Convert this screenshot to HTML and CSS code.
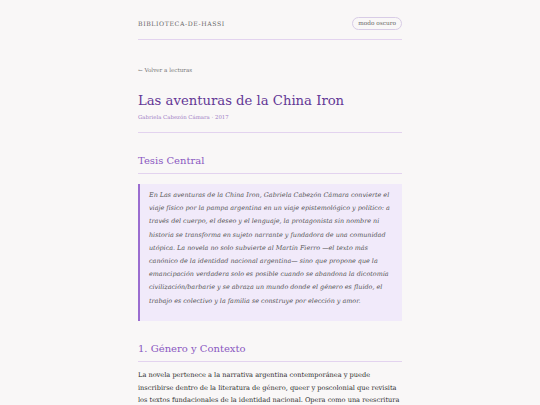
FILE: index.html
```html
<!DOCTYPE html>
<html lang="es">
<head>
<meta charset="utf-8">
<title>Las aventuras de la China Iron</title>
<link rel="stylesheet" href="styles.css">
</head>
<body>
<div class="page">
  <header class="site-header">
    <span class="brand">BIBLIOTECA-DE-HASSI</span>
    <button class="mode-btn">modo oscuro</button>
  </header>
  <a class="back" href="#">← Volver a lecturas</a>
  <div class="title-block">
    <h1 class="title">Las aventuras de la China Iron</h1>
    <p class="meta">Gabriela Cabezón Cámara · 2017</p>
  </div>
  <h2 class="section-title">Tesis Central</h2>
  <blockquote class="thesis">En Las aventuras de la China Iron, Gabriela Cabezón Cámara convierte el viaje físico por la pampa argentina en un viaje epistemológico y político: a través del cuerpo, el deseo y el lenguaje, la protagonista sin nombre ni historia se transforma en sujeto narrante y fundadora de una comunidad utópica. La novela no solo subvierte al Martín Fierro —el texto más canónico de la identidad nacional argentina— sino que propone que la emancipación verdadera solo es posible cuando se abandona la dicotomía civilización/barbarie y se abraza un mundo donde el género es fluido, el trabajo es colectivo y la familia se construye por elección y amor.</blockquote>
  <h2 class="section-title">1. Género y Contexto</h2>
  <p class="body-text">La novela pertenece a la narrativa argentina contemporánea y puede inscribirse dentro de la literatura de género, queer y poscolonial que revisita los textos fundacionales de la identidad nacional. Opera como una reescritura del poema gauchesco, desplazando la voz masculina hacia una mirada femenina y disidente.</p>
</div>
</body>
</html>
```
FILE: styles.css
```css
html, body {
  margin: 0;
  padding: 0;
  background: #f9f7f7;
}
body {
  font-family: "DejaVu Serif", Georgia, serif;
  color: #333;
}
.page {
  width: 264px;
  margin: 0 auto;
  padding-top: 17px;
}
.site-header {
  display: flex;
  justify-content: space-between;
  align-items: center;
  padding-bottom: 9px;
  border-bottom: 1px solid #e3d3ef;
}
.brand {
  font-size: 6.2px;
  letter-spacing: 0.6px;
  color: #666;
}
.mode-btn {
  font-family: inherit;
  font-size: 5.8px;
  color: #666;
  background: transparent;
  border: 1px solid #d8cce6;
  border-radius: 8px;
  padding: 2px 5px;
  line-height: 7px;
}
.back {
  display: block;
  margin-top: 27px;
  font-size: 5.6px;
  color: #777;
  text-decoration: none;
}
.title-block {
  margin-top: 19px;
  padding-bottom: 12px;
  border-bottom: 1px solid #e3d3ef;
}
.title {
  margin: 0;
  font-weight: normal;
  font-size: 13.2px;
  line-height: 18px;
  color: #643896;
}
.meta {
  margin: 4px 0 0;
  font-size: 5.4px;
  color: #a17fc6;
}
.section-title {
  margin: 21px 0 0;
  font-weight: normal;
  font-size: 10px;
  line-height: 14px;
  color: #8a58c1;
  padding-bottom: 5px;
  border-bottom: 1px solid #e3d3ef;
}
.thesis {
  margin: 10px 0 0;
  padding: 5px 10px 13px 9px;
  background: #f1eafa;
  border-left: 2px solid #9b6dd0;
  font-style: italic;
  font-size: 6.4px;
  line-height: 13.2px;
  color: #555;
}
.body-text {
  margin: 7px 0 0;
  font-size: 6.6px;
  line-height: 12.8px;
  color: #2e2e2e;
}
```
